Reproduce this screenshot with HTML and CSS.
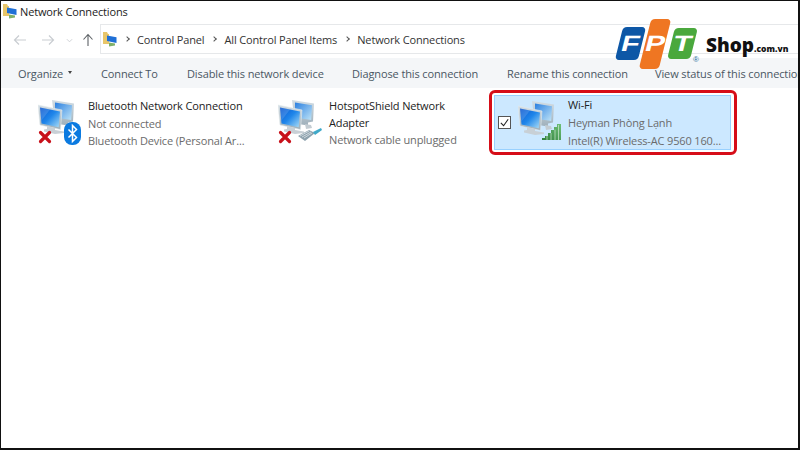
FILE: index.html
```html
<!DOCTYPE html>
<html lang="en">
<head>
<meta charset="utf-8">
<title>Network Connections</title>
<link rel="stylesheet" href="styles.css">
</head>
<body>
<svg class="defs" width="0" height="0" aria-hidden="true">
  <defs>
    <linearGradient id="scr" x1="0" y1="0" x2="1" y2="1"><stop offset="0" stop-color="#0a55cf"/><stop offset=".5" stop-color="#1f86ea"/><stop offset="1" stop-color="#a9dcf6"/></linearGradient>
    <linearGradient id="scrb" x1="0" y1="0" x2="1" y2="1"><stop offset="0" stop-color="#2a7fe0"/><stop offset="1" stop-color="#bfe4f7"/></linearGradient>
    <linearGradient id="bez" x1="0" y1="0" x2="0" y2="1"><stop offset="0" stop-color="#d3dde4"/><stop offset="1" stop-color="#9fb0bb"/></linearGradient>
    <linearGradient id="sig" x1="0" y1="1" x2="1" y2="0"><stop offset="0" stop-color="#2f7f3c"/><stop offset="1" stop-color="#6fc078"/></linearGradient>
    <symbol id="pcs" viewBox="0 0 38 36">
      <path d="M14 1l22 3.500-1 18-5 1v3l-13-2z" fill="url(#bez)"/>
      <path d="M17 3.500l17 2.700-.8 14.800-16.200-2.500z" fill="url(#scrb)"/>
      <path d="M27 25l6 1 1 3-6 1z" fill="#c3ccd2"/>
      <path d="M0 6l24 5-1.500 19.500L2 26z" fill="url(#bez)" stroke="#e6ecef" stroke-width=".6"/>
      <path d="M2 8.500l20 4-1.300 15.700L3.500 24.500z" fill="url(#scr)"/>
      <path d="M2 8.500l10 2-8.500 11z" fill="#fff" opacity=".14"/>
      <path d="M9 27l8 2v2l9 1.500v1.500l-9 1-11-2.500v-2l3-.5z" fill="#c8d0d6"/>
    </symbol>
    <symbol id="redx" viewBox="0 0 14 14">
      <path d="M2.500 2.500l9 9M11.500 2.500l-9 9" stroke="#c8101a" stroke-width="3.200" stroke-linecap="round"/>
    </symbol>
    <symbol id="folderpc" viewBox="0 0 14 16">
      <path d="M0 1h4l1 2h1v10H0z" fill="#e8c66a"/>
      <path d="M4 4.500l9.500 1.800v5.700L4 10z" fill="#1f6fd6"/>
      <path d="M6 11.500l6 1v2l-6 1z" fill="#7fb069"/>
    </symbol>
  </defs>
</svg>
<div class="window">
  <header class="titlebar">
    <svg class="ico14" viewBox="0 0 14 16"><use href="#folderpc"/></svg>
    <span>Network Connections</span>
  </header>
  <nav class="addressrow">
    <div class="navbtns">
      <svg class="nav" viewBox="0 0 14 12"><path d="M13 6H2M6 1.500L1.500 6 6 10.500" fill="none" stroke="#c9cdd1" stroke-width="1.200"/></svg>
      <svg class="nav" viewBox="0 0 14 12"><path d="M1 6h11M8 1.500L12.500 6 8 10.500" fill="none" stroke="#c9cdd1" stroke-width="1.200"/></svg>
      <svg class="chev" viewBox="0 0 8 5"><path d="M1 1l3 3 3-3" fill="none" stroke="#c9cdd1" stroke-width="1"/></svg>
      <svg class="up" viewBox="0 0 12 14"><path d="M6 13V2M1.500 6.500L6 1.500l4.500 5" fill="none" stroke="#5d6266" stroke-width="1.100"/></svg>
    </div>
    <div class="crumbs">
      <svg class="ico14" viewBox="0 0 14 16"><use href="#folderpc"/></svg>
      <i class="sep"></i><span>Control Panel</span>
      <i class="sep"></i><span>All Control Panel Items</span>
      <i class="sep"></i><span>Network Connections</span>
    </div>
  </nav>
  <div class="toolbar">
    <span class="tool organize">Organize<i class="caret"></i></span>
    <span class="tool t-connect">Connect To</span>
    <span class="tool t-disable">Disable this network device</span>
    <span class="tool t-diag">Diagnose this connection</span>
    <span class="tool t-rename">Rename this connection</span>
    <span class="tool t-view">View status of this connection</span>
  </div>
  <main class="items">
    <div class="item item-bt">
      <div class="icon">
        <svg class="pcs" viewBox="0 0 38 36"><use href="#pcs"/></svg>
        <svg class="x" viewBox="0 0 14 14"><use href="#redx"/></svg>
        <svg class="bt" viewBox="0 0 17 23"><rect width="17" height="23" rx="8" fill="#0b7ae0"/><path d="M4.500 7.500l8 8-4 4V3.500l4 4-8 8" fill="none" stroke="#fff" stroke-width="1.500"/></svg>
      </div>
      <div class="text">
        <div class="name">Bluetooth Network Connection</div>
        <div class="sub">Not connected</div>
        <div class="sub">Bluetooth Device (Personal Ar...</div>
      </div>
    </div>
    <div class="item item-hs">
      <div class="icon">
        <svg class="pcs" viewBox="0 0 38 36"><use href="#pcs"/></svg>
        <svg class="x" viewBox="0 0 14 14"><use href="#redx"/></svg>
        <svg class="cable" viewBox="0 0 26 15"><path d="M1 9l11-6 6 3-10 8z" fill="#8ea2ae"/><path d="M3 9l9-5M5 10l9-5M7 11l8-5" stroke="#e8eef1" stroke-width=".7"/><path d="M16 5l8-4 1 2-7 5z" fill="#3fa9c9"/></svg>
      </div>
      <div class="text">
        <div class="name">HotspotShield Network Adapter</div>
        <div class="sub">Network cable unplugged</div>
      </div>
    </div>
    <div class="highlight">
      <div class="item item-wifi">
        <span class="check"><svg viewBox="0 0 12 12"><path d="M2 6.500l3 3 5-7" fill="none" stroke="#222" stroke-width="1.200"/></svg></span>
        <div class="icon">
          <svg class="pcs" viewBox="0 0 38 36"><use href="#pcs"/></svg>
          <svg class="bars" viewBox="0 0 20 17"><path d="M0 17v-2h3v-2h3v-3h3V7h3V4h3V1h4v16z" fill="url(#sig)"/><path d="M5 17v-4M9 17v-7M13 17V6.500M16.500 17V2" stroke="#cfe9d2" stroke-width=".7"/></svg>
        </div>
        <div class="text">
          <div class="name">Wi-Fi</div>
          <div class="sub">Heyman Phòng Lạnh</div>
          <div class="sub">Intel(R) Wireless-AC 9560 160...</div>
        </div>
      </div>
    </div>
  </main>
  <div class="logo">
    <div class="tiles">
      <span class="tile blue"><b>F</b></span>
      <span class="tile orange"><b>P</b></span>
      <span class="tile green"><b>T</b></span>
      <i class="reg">®</i>
    </div>
    <span class="shop">Shop<small>.com.vn</small></span>
  </div>
</div>
</body>
</html>
```
FILE: styles.css
```css
* { box-sizing: border-box; }
html, body { margin: 0; padding: 0; background: #fff; }
.defs { position: absolute; }
.window {
  position: relative;
  width: 800px;
  height: 450px;
  overflow: hidden;
  background: #fff;
  border-top: 1px solid #111;
  border-left: 1px solid #111;
  border-right: 2px solid #111;
  border-bottom: 2px solid #111;
  font-family: "Open Sans", "Noto Sans", sans-serif;
  font-size: 11px;
  letter-spacing: -0.15px;
  color: #333;
}
.ico14 { width: 14px; height: 16px; flex: none; }
.titlebar {
  height: 20px;
  display: flex;
  align-items: center;
  gap: 3px;
  padding-left: 2px;
  color: #222;
}
.addressrow { height: 37px; display: flex; align-items: stretch; }
.navbtns { width: 99px; display: flex; align-items: center; padding: 1px 0 0 12px; }
.nav { width: 14px; height: 12px; margin-right: 14px; }
.chev { width: 7px; height: 5px; margin: 0 10px 0 -3px; }
.up { width: 12px; height: 14px; margin-left: -1px; }
.crumbs {
  flex: 1;
  display: flex;
  align-items: center;
  gap: 6px;
  margin: 3px 0 4px;
  padding: 0 0 0 2px;
  border: 1px solid #e6e8ea;
  border-right: none;
  color: #333;
}
.sep {
  width: 4px; height: 4px; margin: 0 2px;
  border-top: 1.500px solid #555;
  border-right: 1.500px solid #555;
  transform: rotate(45deg);
}
.toolbar {
  height: 30px;
  display: flex;
  align-items: center;
  background: #f4f6f8;
  color: #4a5663;
  white-space: nowrap;
  padding-left: 17px;
  letter-spacing: -0.12px;
}
.tool { flex: none; }
.organize { display: flex; align-items: center; gap: 5px; width: 83px; }
.caret { width: 0; height: 0; margin-top: -1px; border: 2.500px solid transparent; border-top: 3px solid #444; border-bottom: 0; }
.t-connect { width: 86px; }
.t-disable { width: 165px; }
.t-diag { width: 155px; }
.t-rename { width: 148px; }
.items { display: flex; align-items: flex-start; padding: 2px 0 0 37px; }
.item { display: flex; color: #6b6b6b; line-height: 17.500px; white-space: nowrap; }
.item-bt { width: 240px; gap: 6px; padding-top: 7px; }
.item-hs { width: 211px; gap: 7px; padding-top: 7px; line-height: 17px; }
.icon { position: relative; width: 44px; height: 48px; flex: none; }
.pcs { position: absolute; left: 0; top: 2px; width: 38px; height: 36px; }
.x { position: absolute; left: 0; top: 33px; width: 14px; height: 14px; }
.bt { position: absolute; left: 26px; top: 25px; width: 17px; height: 23px; }
.cable { position: absolute; left: 19px; top: 30px; width: 26px; height: 15px; }
.bars { position: absolute; left: 24px; top: 25px; width: 20px; height: 17px; }
.name { color: #222; }
.item-hs .text { width: 136px; white-space: normal; }
.highlight {
  width: 248px;
  height: 65px;
  padding: 2px 3px 2px 2px;
  border: 3px solid #d60d18;
  border-radius: 6px;
}
.item-wifi {
  height: 55px;
  align-items: center;
  padding: 0 0 0 3px;
  background: #cce8ff;
  border: 1px solid #99d1ff;
  gap: 7px;
  line-height: 18px;
}
.item-wifi .text { padding-top: 1px; }
.check {
  width: 13px; height: 13px; flex: none;
  background: #fff;
  border: 1px solid #555;
  display: flex;
}
.check svg { width: 11px; height: 11px; }
.item-wifi .icon { width: 43px; height: 49px; }
.logo {
  position: absolute;
  left: 614px;
  top: 18px;
  display: flex;
  align-items: flex-end;
  letter-spacing: 0;
}
.tiles { position: relative; width: 84px; height: 51px; }
.tile {
  position: absolute;
  transform: skewX(-14deg);
  border-radius: 4px;
  display: flex;
  align-items: center;
  justify-content: center;
  color: #fff;
}
.tile b { transform: scaleX(1.350); font: 700 22px/1 "Liberation Sans", sans-serif; }
.blue { left: 4px; top: 8px; width: 23px; height: 33px; background: #0d57a6; }
.orange { left: 30px; top: 0; width: 20px; height: 50px; background: #ef7622; }
.green { left: 56px; top: 9px; width: 23px; height: 31px; background: #4aa83d; }
.reg { position: absolute; left: 78px; top: 36px; font: normal 8px "Liberation Sans", sans-serif; color: #1c6a9a; }
.shop {
  margin: 0 0 10px 7px;
  font: 800 19px "Open Sans", sans-serif;
  color: #111;
  line-height: 22px;
  white-space: nowrap;
}
.shop small { font-size: 8.500px; }
```
